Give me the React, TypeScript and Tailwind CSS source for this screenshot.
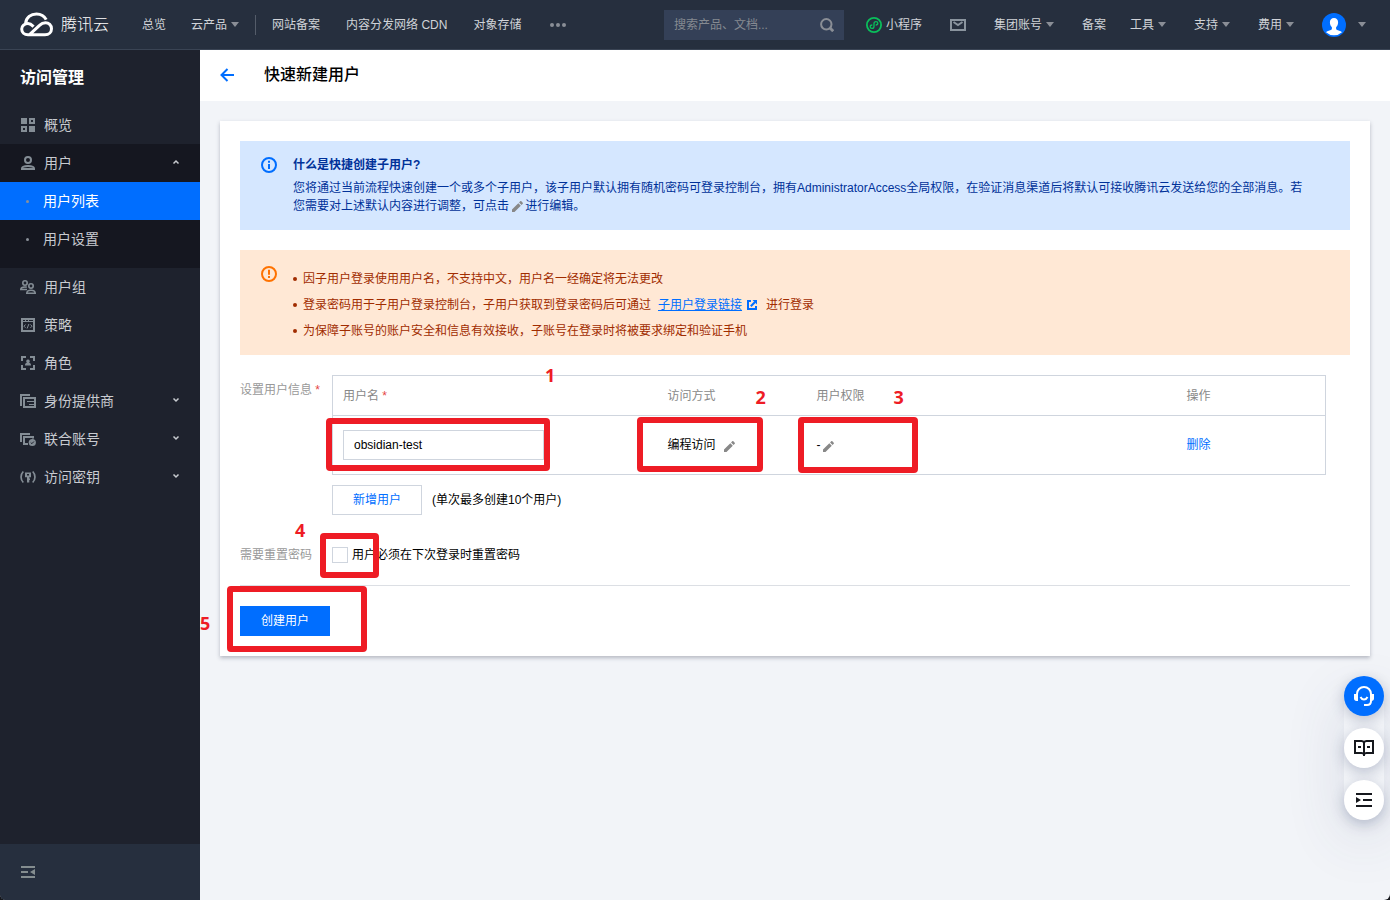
import React, { useState } from "react";

const FONT = "font-['Liberation_Sans','Noto_Sans_CJK_SC',sans-serif]";

function Caret() {
  return (
    <svg width="8" height="5" viewBox="0 0 8 5" className="ml-1 shrink-0 fill-[#8a8e96]" aria-hidden="true">
      <path d="M0 0h8L4 5z" />
    </svg>
  );
}

function Logo() {
  return (
    <a href="#home" className="flex items-center gap-2 text-base font-light text-white">
      <svg width="33" height="25" viewBox="0 0 33 25" fill="none" stroke="#fff" strokeWidth="3" aria-hidden="true">
        <path d="M5.6 11.6C6 5.5 11 1.9 16.5 1.9c4.400 0 8 2.400 9.700 5.700" />
        <path d="M13.600 14.600C11.600 12.700 10.200 11.600 8 11.600c-3.500 0-6.300 2.400-6.300 5.500 0 3.300 2.600 5.700 6.300 5.700h17c4 0 6.500-2.800 6.500-6.100 0-3.400-2.700-6-6-6-2.600 0-4.400 1.100-6 2.700L9.800 22.400" />
      </svg>
      腾讯云
    </a>
  );
}

function Header() {
  return (
    <header className="flex h-[50px] shrink-0 items-center justify-between border-b border-[#3a4454] bg-[#262f3e] pl-5 pr-6 text-xs text-[#d0d3d8]">
      <div className="flex items-center whitespace-nowrap">
        <Logo />
        <nav className="ml-5 flex items-center">
          <a href="#overview" className="px-[13px]">总览</a>
          <button type="button" className="flex items-center pl-3 pr-4">云产品<Caret /></button>
          <span className="h-5 w-px bg-[#545c69]" />
          <a href="#beian" className="pl-4 pr-[13px]">网站备案</a>
          <a href="#cdn" className="px-[13px]">内容分发网络 CDN</a>
          <a href="#cos" className="px-[13px]">对象存储</a>
          <button type="button" aria-label="更多" className="px-4">
            <svg width="16" height="4" viewBox="0 0 16 4" className="fill-[#8a8e96]">
              <circle cx="2" cy="2" r="2" />
              <circle cx="8" cy="2" r="2" />
              <circle cx="14" cy="2" r="2" />
            </svg>
          </button>
        </nav>
      </div>
      <div className="flex items-center whitespace-nowrap">
        <form className="flex h-[30px] w-[180px] items-center bg-[#344057] px-2.5">
          <input
            aria-label="搜索产品、文档"
            placeholder="搜索产品、文档..."
            className="min-w-0 flex-1 bg-transparent outline-none placeholder:text-[#858a91]"
          />
          <button type="button" aria-label="搜索">
            <svg width="14" height="14" viewBox="0 0 14 14" fill="none" stroke="#8a8e96" strokeWidth="2">
              <circle cx="6.300" cy="6.300" r="5.200" />
              <path d="M10 10l3.200 3.200" strokeWidth="2.800" />
            </svg>
          </button>
        </form>
        <a href="#mini" className="ml-[22px] flex items-center gap-1">
          <svg width="16" height="16" viewBox="0 0 16 16" fill="none" stroke="#0abf5b" aria-hidden="true">
            <circle cx="8" cy="8" r="7.100" strokeWidth="1.800" />
            <path d="M6.300 8C4.900 8 4.200 8.800 4.200 9.700c0 1 .8 1.700 1.800 1.700 1.200 0 2-.8 2-1.900v-3c0-1.100.8-1.900 2-1.900 1 0 1.800.7 1.800 1.700 0 .9-.7 1.700-2.100 1.700" strokeWidth="1.300" />
          </svg>
          小程序
        </a>
        <button type="button" aria-label="消息" className="ml-7">
          <svg width="16" height="12" viewBox="0 0 16 12" fill="none" stroke="#8a949e" strokeWidth="2">
            <path d="M1 1h14v10H1zM3.500 3L8 6 12.500 3" />
          </svg>
        </button>
        <button type="button" className="ml-7 flex items-center">集团账号<Caret /></button>
        <a href="#record" className="ml-7">备案</a>
        <button type="button" className="ml-6 flex items-center">工具<Caret /></button>
        <button type="button" className="ml-7 flex items-center">支持<Caret /></button>
        <button type="button" className="ml-7 flex items-center">费用<Caret /></button>
        <button type="button" aria-label="账号" className="ml-7 flex items-center gap-2">
          <svg width="24" height="24" viewBox="0 0 24 24">
            <circle cx="12" cy="12" r="12" fill="#006eff" />
            <path d="M12 5c-2.500 0-4.100 1.700-4.100 4.300 0 2.200.8 3.900 2 4.900v1.600c0 .6-.4 1-1 1.200-2.100.7-3.900 1.200-4.900 2.200a12 12 0 0 0 16 0c-1-1-2.800-1.500-4.900-2.200-.6-.2-1-.6-1-1.200v-1.600c1.200-1 2-2.700 2-4.900C16.100 6.700 14.500 5 12 5z" fill="#fff" />
          </svg>
          <Caret />
        </button>
      </div>
    </header>
  );
}

const menuIcons: Record<string, React.ReactNode> = {
  overview: <path d="M1 1h6v6H1zM9 1h6v6H9zm2 2v2h2V3zM1 9h6v6H1zm2 2v2h2v-2zM9 9h6v6H9z" fill="currentColor" fillRule="evenodd" />,
  user: (
    <g fill="none" stroke="currentColor" strokeWidth="2">
      <circle cx="8" cy="5" r="3" />
      <path d="M2 14v-.5c0-1.700 2.200-2.500 6-2.500s6 .8 6 2.500v.5z" />
    </g>
  ),
  group: (
    <g fill="none" stroke="currentColor" strokeWidth="1.600">
      <circle cx="5" cy="4" r="2.200" />
      <path d="M7 10.500H.8c0-1.800 1.500-2.500 4.200-2.500.7 0 1.300 0 1.800.2" />
      <circle cx="11" cy="7" r="2.200" />
      <path d="M6.800 14.200c0-2.200 1.600-3 4.200-3s4.200.8 4.200 3z" />
    </g>
  ),
  policy: (
    <g fill="none" stroke="currentColor">
      <path d="M2 2h12v12H2z" strokeWidth="2" />
      <path d="M2 4.500h12" />
      <path d="M5.500 2v3M8.500 2v3" />
      <path d="M5.500 7.500L4 9.200l1.500 1.600M10.500 7.500L12 9.200l-1.500 1.600M8.900 7l-1.800 4.500" />
    </g>
  ),
  role: (
    <g fill="none" stroke="currentColor" strokeWidth="2">
      <path d="M6 2H2v4M10 2h4v4M6 14H2v-4M10 14h4v-4" />
      <path d="M8 4.500a1.800 1.800 0 0 1 1 3.300c1.300.3 2 .9 2 2.700H5c0-1.800.7-2.400 2-2.700a1.800 1.800 0 0 1 1-3.300z" fill="currentColor" stroke="none" />
    </g>
  ),
  idp: (
    <g fill="none" stroke="currentColor" strokeWidth="2">
      <path d="M1 13V2h9" />
      <path d="M4 5h11v9H4z" />
      <path d="M7 8.500h8M9 11.500h6" strokeWidth="1" />
    </g>
  ),
  union: (
    <g fill="none" stroke="currentColor" strokeWidth="2">
      <path d="M1 11V3h9" />
      <path d="M8 13H4V6h9v1.500" />
      <circle cx="12.300" cy="11.500" r="3.600" fill="currentColor" stroke="none" />
      <path d="M10.700 11.500l1.200 1.200 2-2.200" stroke="#1e222d" strokeWidth="1" />
    </g>
  ),
  key: (
    <g fill="none" stroke="currentColor" strokeWidth="1.700">
      <path d="M3.300 2.500C.3 5.500.3 10.500 3.300 13.500M12.700 2.500c3 3 3 8 0 11" />
      <path d="M5 3.500h6v4.700H9.300v1.300H10v1.500h-.7v2.500H7V8.200H5zm2 1.600v1.500h2V5.100z" fill="currentColor" fillRule="evenodd" stroke="none" />
    </g>
  ),
};

function MenuItem({ icon, label, arrow }: { icon: string; label: string; arrow?: "up" | "down" }) {
  return (
    <a href={`#${icon}`} className="flex h-[38px] items-center px-5">
      <svg width="16" height="16" viewBox="0 0 16 16" className="mr-2 shrink-0 text-[#848d95]" aria-hidden="true">
        {menuIcons[icon]}
      </svg>
      <span className="flex-1">{label}</span>
      {arrow && (
        <svg width="8" height="6" viewBox="0 0 8 6" fill="none" stroke="currentColor" strokeWidth="1.500" className="mb-0.5" aria-hidden="true">
          <path d={arrow === "up" ? "M1.500 4.500L4 2l2.500 2.500" : "M1.500 1.500L4 4l2.500-2.500"} />
        </svg>
      )}
    </a>
  );
}

function Sidebar() {
  return (
    <aside className="flex w-[200px] shrink-0 flex-col bg-[#1e222d] text-sm text-[#c8cbd0]">
      <h2 className="flex h-14 items-center px-5 text-base font-bold text-white">访问管理</h2>
      <nav className="flex-1">
        <MenuItem icon="overview" label="概览" />
        <div className="bg-[#151720] pb-2.5">
          <MenuItem icon="user" label="用户" arrow="up" />
          <a href="#users" className="flex h-[38px] items-center bg-[#006eff] pl-[26px] text-white">
            <span className="mr-3.5 size-[3px] rounded-full bg-[#8a9099]" />
            用户列表
          </a>
          <a href="#settings" className="flex h-[38px] items-center pl-[26px]">
            <span className="mr-3.5 size-[3px] rounded-full bg-[#8a9099]" />
            用户设置
          </a>
        </div>
        <MenuItem icon="group" label="用户组" />
        <MenuItem icon="policy" label="策略" />
        <MenuItem icon="role" label="角色" />
        <MenuItem icon="idp" label="身份提供商" arrow="down" />
        <MenuItem icon="union" label="联合账号" arrow="down" />
        <MenuItem icon="key" label="访问密钥" arrow="down" />
      </nav>
      <div className="flex h-14 items-center bg-[#262f3e] px-[21px]">
        <button type="button" aria-label="收起菜单">
          <svg width="14" height="12" viewBox="0 0 14 12" className="fill-[#848d8f]">
            <path d="M0 0h14v2H0zM0 5h7v2H0zM0 10h14v2H0zM14 3v6L9 6z" />
          </svg>
        </button>
      </div>
    </aside>
  );
}

function Pencil() {
  return (
    <svg width="11" height="11" viewBox="0 0 12 12" className="inline-block fill-[#888]" aria-hidden="true">
      <path d="M0 12V9.300L6.900 2.400l2.700 2.700L2.700 12zM7.700 1.600L9 .3c.4-.4.8-.4 1.200 0l1.500 1.500c.4.400.4.800 0 1.200l-1.300 1.300z" />
    </svg>
  );
}

// red highlight frame drawn over a control
function Frame({ className }: { className: string }) {
  return <span className={`pointer-events-none absolute rounded border-6 border-[#ee1c25] ${className}`} />;
}

function Step({ n, className }: { n: number; className: string }) {
  return (
    <span className={`pointer-events-none absolute font-['Noto_Sans',sans-serif] text-lg leading-none font-bold text-[#ee1c25] ${className}`}>
      {n}
    </span>
  );
}

function InfoAlert() {
  return (
    <section className="flex bg-[#d5e7ff] py-[15px] pr-10 pl-5 text-xs leading-[18px] text-[#003199]">
      <svg width="18" height="18" viewBox="0 0 18 18" className="mr-[15px] shrink-0" aria-hidden="true">
        <circle cx="9" cy="9" r="7" fill="none" stroke="#006eff" strokeWidth="2" />
        <path d="M8 4.800h2v2H8zM8 8h2v5H8z" fill="#006eff" />
      </svg>
      <div>
        <h4 className="mb-[5px] font-bold">什么是快捷创建子用户?</h4>
        <p>
          您将通过当前流程快速创建一个或多个子用户，该子用户默认拥有随机密码可登录控制台，拥有AdministratorAccess全局权限，在验证消息渠道后将默认可接收腾讯云发送给您的全部消息。若您需要对上述默认内容进行调整，可点击 <Pencil />
          <span className="ml-0.5">进行编辑。</span>
        </p>
      </div>
    </section>
  );
}

function WarningAlert() {
  return (
    <section className="mt-5 flex bg-[#ffe8d5] py-[15px] pr-10 pl-5 text-xs leading-[18px] text-[#a12c00]">
      <svg width="18" height="18" viewBox="0 0 18 18" className="mr-[15px] shrink-0" aria-hidden="true">
        <circle cx="9" cy="9" r="7" fill="none" stroke="#ff7200" strokeWidth="2" />
        <path d="M8 4.800h2v5H8zM8 11h2v2H8z" fill="#ff7200" />
      </svg>
      <ul className="space-y-2 pt-[5px]">
        <Tip>因子用户登录使用用户名，不支持中文，用户名一经确定将无法更改</Tip>
        <Tip>
          登录密码用于子用户登录控制台，子用户获取到登录密码后可通过
          <a href="#login" className="mr-2 ml-[7px] text-[#006eff]">
            <span className="underline">子用户登录链接</span>
            <svg width="10" height="10" viewBox="0 0 10 10" fill="none" stroke="#006eff" strokeWidth="2" className="mr-px mb-0.5 ml-[5px] inline-block" aria-hidden="true">
              <path d="M4 1H1v8h8V6M3.800 6.200L8 2" />
              <path d="M5.500 0H10v4.500z" fill="#006eff" stroke="none" />
            </svg>
          </a>
          进行登录
        </Tip>
        <Tip>为保障子账号的账户安全和信息有效接收，子账号在登录时将被要求绑定和验证手机</Tip>
      </ul>
    </section>
  );
}

function Tip({ children }: { children: React.ReactNode }) {
  return (
    <li className="flex">
      <span className="mt-[7px] mr-1.5 size-1 shrink-0 rounded-full bg-[#a12c00]" />
      <span>{children}</span>
    </li>
  );
}

function UserTable() {
  const [name, setName] = useState("obsidian-test");

  return (
    <table className="w-full table-fixed border border-[#cfd5de] text-left">
      <thead className="text-[#888]">
        <tr className="h-10 border-b border-[#cfd5de]">
          <th className="relative w-[325px] px-2.5 font-normal">
            用户名 <span className="text-[#e54545]">*</span>
            <Step n={1} className="-top-2.5 left-[212px]" />
          </th>
          <th className="relative w-[15%] px-2.5 font-normal">
            访问方式
            <Step n={2} className="top-3 left-[98px]" />
          </th>
          <th className="relative px-2.5 font-normal">
            用户权限
            <Step n={3} className="top-3 left-[87px]" />
          </th>
          <th className="w-[15%] px-2.5 font-normal">操作</th>
        </tr>
      </thead>
      <tbody>
        <tr>
          <td className="relative px-2.5 py-3.5">
            <input
              aria-label="用户名"
              value={name}
              onChange={(e) => setName(e.target.value)}
              className="block h-[30px] w-[201px] border border-[#cfd5de] px-2.5 outline-none"
            />
            <Frame className="top-0.5 -left-[7px] h-[53px] w-56" />
          </td>
          <td className="relative px-2.5">
            编程访问
            <button type="button" aria-label="编辑访问方式" className="ml-2 align-middle"><Pencil /></button>
            <Frame className="top-px -left-[21px] h-[55px] w-[126px]" />
          </td>
          <td className="relative px-2.5">
            -
            <button type="button" aria-label="编辑用户权限" className="ml-[3px] align-middle"><Pencil /></button>
            <Frame className="top-px -left-2 h-14 w-[120px]" />
          </td>
          <td className="px-2.5">
            <button type="button" className="text-[#006eff]">删除</button>
          </td>
        </tr>
      </tbody>
    </table>
  );
}

function CreateForm() {
  const [reset, setReset] = useState(false);

  return (
    <form className="mt-5 text-xs leading-[18px] text-black" onSubmit={(e) => e.preventDefault()}>
      <div className="flex pr-6">
        <div className="w-[92px] shrink-0 pt-1.5 whitespace-nowrap text-[#999]">
          设置用户信息 <span className="text-[#e54545]">*</span>
        </div>
        <div className="min-w-0 flex-1">
          <UserTable />
          <div className="mt-2.5 flex items-center gap-2.5">
            <button type="button" className="h-[30px] w-[90px] border border-[#cfd5de] text-[#006eff]">新增用户</button>
            <span>(单次最多创建10个用户)</span>
          </div>
        </div>
      </div>
      <div className="mt-[30px] flex items-center pb-5">
        <div className="w-[92px] shrink-0 text-[#999]">需要重置密码</div>
        <label className="relative flex h-5 items-center gap-1">
          <input
            type="checkbox"
            checked={reset}
            onChange={(e) => setReset(e.target.checked)}
            className="size-4 appearance-none border border-[#cfd5de] bg-white checked:bg-[#006eff]"
          />
          用户必须在下次登录时重置密码
          <Step n={4} className="-top-6 -left-[37px]" />
          <Frame className="-top-3 -left-3 h-[45px] w-[59px]" />
        </label>
      </div>
      <div className="border-t border-[#dcdfe4] pt-5">
        <div className="relative">
          <button type="submit" className="block h-[30px] w-[90px] bg-[#006eff] text-white">创建用户</button>
          <Step n={5} className="top-2 -left-10" />
          <Frame className="-top-5 -left-[13px] h-[66px] w-[140px]" />
        </div>
      </div>
    </form>
  );
}

const floatButton = "flex size-10 items-center justify-center rounded-full shadow-[0_4px_14px_rgba(55,70,110,0.3)]";

function FloatingTools() {
  return (
    <div className="fixed right-1.5 bottom-20 flex flex-col gap-3 rounded-full shadow-[0_20px_60px_rgba(55,70,110,0.14)]">
      <button type="button" aria-label="在线客服" className={`${floatButton} bg-[#006eff]`}>
        <svg width="20" height="20" viewBox="0 0 20 20" fill="none" stroke="#fff" strokeWidth="2">
          <path d="M3 9V8a7 7 0 0 1 14 0v7c0 2.500-1.500 4-4 4h-3" />
          <path d="M0 8h4v7H2.500C1 15 0 14 0 12.500zM16 8h4v4.500c0 1.500-1 2.500-2.500 2.500H16z" fill="#fff" stroke="none" />
          <path d="M6.500 11c.8 1.600 2 2.500 3.500 2.500s2.700-.9 3.500-2.500" />
        </svg>
      </button>
      <button type="button" aria-label="文档" className={`${floatButton} bg-white`}>
        <svg width="20" height="16" viewBox="0 0 20 16" fill="none" stroke="#16181d" strokeWidth="2">
          <path d="M10 2.500C9.500 1.500 8.700 1 7.500 1H1v12h6.500c1.200 0 2 .4 2.500 1.300.5-.9 1.300-1.300 2.500-1.300H19V1h-6.500C11.300 1 10.500 1.500 10 2.500zV16M4 7h3M13 7h3" />
        </svg>
      </button>
      <button type="button" aria-label="展开" className={`${floatButton} bg-white`}>
        <svg width="16" height="14" viewBox="0 0 16 14" className="fill-[#16181d]">
          <path d="M0 0h16v2H0zM7 6h9v2H7zM0 12h16v2H0zM0 4l5 3-5 3z" />
        </svg>
      </button>
    </div>
  );
}

export default function App() {
  return (
    <div className="bg-[#16181d]">
      <div className={`flex min-h-screen flex-col overflow-hidden rounded-b-md bg-[#f2f4f8] ${FONT}`}>
        <Header />
        <div className="flex flex-1">
          <Sidebar />
          <main className="min-w-0 flex-1">
            <div className="flex h-[51px] items-center bg-white px-5 pb-0.5">
              <button type="button" aria-label="返回" className="mr-[30px]">
                <svg width="14" height="14" viewBox="0 0 14 14" fill="none" stroke="#006eff" strokeWidth="2">
                  <path d="M7.500 1L1.500 7l6 6M1.500 7H14" />
                </svg>
              </button>
              <h1 className="text-base font-medium text-black">快速新建用户</h1>
            </div>
            <div className="m-5 bg-white p-5 shadow-[0_2px_4px_rgba(54,58,80,0.32)]">
              <InfoAlert />
              <WarningAlert />
              <CreateForm />
            </div>
          </main>
        </div>
        <FloatingTools />
      </div>
    </div>
  );
}
